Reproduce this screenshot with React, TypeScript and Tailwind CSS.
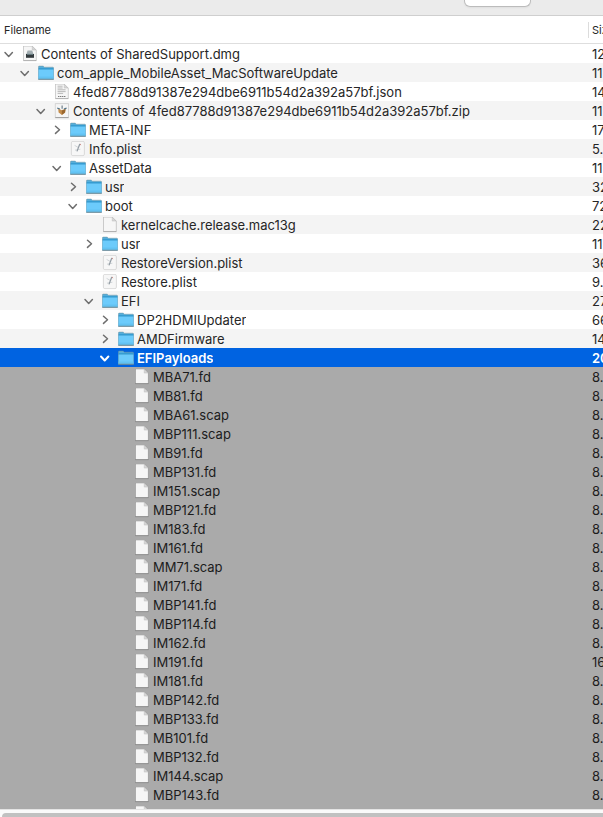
import React, { useState } from "react";

type Kind = "folder" | "dmg" | "json" | "zip" | "plist" | "blank";
type Toggle = "open" | "closed" | "none";
type Entry = { depth: number; kind: Kind; toggle: Toggle; name: string; size: string };

const e = (depth: number, kind: Kind, toggle: Toggle, name: string, size: string): Entry => ({
  depth, kind, toggle, name, size,
});

const tree: Entry[] = [
  e(0, "dmg", "open", "Contents of SharedSupport.dmg", "12"),
  e(1, "folder", "open", "com_apple_MobileAsset_MacSoftwareUpdate", "11"),
  e(2, "json", "none", "4fed87788d91387e294dbe6911b54d2a392a57bf.json", "14"),
  e(2, "zip", "open", "Contents of 4fed87788d91387e294dbe6911b54d2a392a57bf.zip", "11"),
  e(3, "folder", "closed", "META-INF", "17"),
  e(3, "plist", "none", "Info.plist", "5."),
  e(3, "folder", "open", "AssetData", "11"),
  e(4, "folder", "closed", "usr", "32"),
  e(4, "folder", "open", "boot", "72"),
  e(5, "blank", "none", "kernelcache.release.mac13g", "22"),
  e(5, "folder", "closed", "usr", "11"),
  e(5, "plist", "none", "RestoreVersion.plist", "36"),
  e(5, "plist", "none", "Restore.plist", "9."),
  e(5, "folder", "open", "EFI", "27"),
  e(6, "folder", "closed", "DP2HDMIUpdater", "66"),
  e(6, "folder", "closed", "AMDFirmware", "14"),
];

const payloads = [
  "MBA71.fd", "MB81.fd", "MBA61.scap", "MBP111.scap", "MB91.fd", "MBP131.fd", "IM151.scap",
  "MBP121.fd", "IM183.fd", "IM161.fd", "MM71.scap", "IM171.fd", "MBP141.fd", "MBP114.fd",
  "IM162.fd", "IM191.fd", "IM181.fd", "MBP142.fd", "MBP133.fd", "MB101.fd", "MBP132.fd",
  "IM144.scap", "MBP143.fd", "",
];

const indents = ["pl-0", "pl-4", "pl-8", "pl-12", "pl-16", "pl-20", "pl-24", "pl-28"];

function Chevron({ open, selected }: { open: boolean; selected: boolean }) {
  return (
    <svg
      viewBox="0 0 16 16"
      className={`size-4 fill-none ${selected ? "stroke-white" : "stroke-[#6e6e6e]"}`}
      strokeWidth={selected ? 2 : 1.5}
      strokeLinecap="round"
      strokeLinejoin="round"
    >
      <path d={open ? "M5 6.5l3.7 4 3.7-4" : "M7.5 4.2l4 3.6-4 3.6"} />
    </svg>
  );
}

function Page({ children }: { children?: React.ReactNode }) {
  return (
    <svg viewBox="0 1 16 16" className="size-4 shrink-0" aria-hidden="true">
      <path d="M1.5 1.1h8.8l4 4v10.5H1.5z" fill="#f6f6f6" stroke="#000" strokeOpacity=".22" strokeWidth=".8" />
      <path d="M1.5 15.6h12.8" stroke="#000" strokeOpacity=".2" strokeWidth=".8" />
      <path d="M10.2 1.2v3.9h3.9z" fill="#d6d6d6" stroke="#b4b4b4" strokeWidth=".4" />
      {children}
    </svg>
  );
}

function Icon({ kind }: { kind: Kind }) {
  if (kind === "folder") {
    return (
      <svg viewBox="0 0 16 16" className="size-4 shrink-0" aria-hidden="true">
        <path d="M.4 14.4V1.9q0-.8.8-.8h3.6q.6 0 1 .5l.6.6h8.4q.8 0 .8.8v11.4z" fill="#55aedb" stroke="#71909c" strokeWidth=".5" />
        <path d="M.6 3.2h14.8v1.4H.6z" fill="#2f98cf" />
        <path d="M.6 4.6h14.8v9.4H.6z" fill="#6ccbfb" />
        <path d="M.6 11.5h14.8v2.4H.6z" fill="#62c2f2" />
        <path d="M.4 14.2h15.2" stroke="#6f878f" strokeWidth=".8" />
      </svg>
    );
  }
  if (kind === "dmg") {
    return (
      <Page>
        <path d="M5.6 5.4h4.6l1.5 4H4.2z" fill="#a3aeb2" />
        <path d="M4 9h8v3.8H4z" fill="#333a3d" />
        <path d="M5 9.4h6" stroke="#6d8187" />
      </Page>
    );
  }
  if (kind === "json") {
    return (
      <Page>
        <path d="M3.6 3.2h5M3.6 5h5M3.6 6.8h8M3.6 8.6h8M3.6 10.4h5.5" stroke="#a9a9a9" strokeWidth=".8" />
        <path d="M4 13.5h7.5" stroke="#7d7d7d" strokeWidth="1.2" strokeDasharray="1.4 .6" />
      </Page>
    );
  }
  if (kind === "zip") {
    return (
      <svg viewBox="0 0 16 16" className="size-4 shrink-0" aria-hidden="true">
        <path d="M1.3.6h13.2v14H1.3z" fill="#f5f5f5" stroke="#b5b5b5" strokeWidth=".5" />
        <path d="M1.3 14.6h13.2" stroke="#8d8d8d" strokeWidth=".8" />
        <path d="M4.2 5.6l3.6 1.6 4-1.6-.6 4-3.2 2.4-3.4-2.4z" fill="#c48d4c" />
        <path d="M7.8 7.6v4.2l3-2 .6-3.4z" fill="#9a672f" />
        <path d="M7.4 2.4h1.5v3.4H7.4z" fill="#8a979f" />
        <path d="M3.2 5l2.6 1M12.6 5L10 6.2" stroke="#4f7186" strokeWidth="1.3" />
      </svg>
    );
  }
  if (kind === "plist") {
    return (
      <svg viewBox="0 0 16 16" className="size-4 shrink-0" aria-hidden="true">
        <rect x="1.4" y=".4" width="13" height="14.2" rx="1.4" fill="#f7f7f7" stroke="#cecece" strokeWidth=".7" />
        <path d="M4.6 4.4l3.6 2M5 9.2l5.4-1" stroke="#ccd1d5" strokeWidth=".9" />
        <path d="M9.8 3L7 10.4" stroke="#929ba3" strokeWidth="1.2" />
        <path d="M10.2 2.8l.6 1.4" stroke="#c98b86" strokeWidth=".9" />
      </svg>
    );
  }
  return <Page />;
}

function Row({ item, tone, onToggle }: { item: Entry; tone: string; onToggle?: () => void }) {
  const selected = item.name === "EFIPayloads";
  return (
    <tr className={`h-[19px] ${tone}`}>
      <td className="p-0">
        <div className={`flex h-[19px] items-center ${indents[item.depth]}`}>
          {item.toggle === "none" ? (
            <span className="w-[22px] shrink-0" />
          ) : (
            <button type="button" aria-label={`Toggle ${item.name}`} onClick={onToggle} className="w-[22px] shrink-0">
              <Chevron open={item.toggle === "open"} selected={selected} />
            </button>
          )}
          <Icon kind={item.kind} />
          <span className="truncate pl-[3px]">{item.name}</span>
        </div>
      </td>
      <td className="overflow-hidden p-0 pl-1 whitespace-nowrap">{item.size}</td>
    </tr>
  );
}

export default function App() {
  const [open, setOpen] = useState(true);
  return (
    <div className="flex h-screen flex-col overflow-hidden bg-white font-['Inter','Liberation_Sans',sans-serif] text-[13px] leading-4 text-[#262626]">
      <header className="flex h-4 shrink-0 justify-end border-b border-[#cfcfcf] bg-[#ebebeb] pr-[72px]">
        <button
          type="button"
          aria-label="Toolbar action"
          className="h-[7px] w-[67px] rounded-b-md border border-t-0 border-[#bcbcbc] bg-white shadow-xs"
        />
      </header>
      <main className="min-h-0 flex-1 overflow-hidden">
        <table className="w-full table-fixed border-separate border-spacing-0">
          <colgroup>
            <col />
            <col className="w-[15px]" />
          </colgroup>
          <thead>
            <tr className="h-7 text-left text-[11px]">
              <th className="border-b border-[#dedede] p-0 pl-1 font-normal">Filename</th>
              <th className="overflow-hidden border-b border-[#dedede] p-0 font-normal">
                <div className="border-l border-[#dcdcdc] pl-[3px]">Size</div>
              </th>
            </tr>
          </thead>
          <tbody>
            {tree.map((item, i) => (
              <Row key={i} item={item} tone={i % 2 ? "bg-[#f4f4f4]" : "bg-white"} />
            ))}
            <Row
              item={e(6, "folder", open ? "open" : "closed", "EFIPayloads", "20")}
              tone="bg-[#0063e1] font-semibold text-white"
              onToggle={() => setOpen(!open)}
            />
            {open &&
              payloads.map((name, i) => (
                <Row
                  key={i}
                  item={e(7, "blank", "none", name, name === "IM191.fd" ? "16" : name ? "8." : "")}
                  tone="bg-[#aaaaaa] text-[#1c1c1c]"
                />
              ))}
          </tbody>
        </table>
      </main>
      <footer className="h-2 shrink-0 border-t border-[#e4e4e4] bg-[#fafafa] pt-[3px]">
        <div className="ml-0.5 h-2 rounded-l-full bg-[#c1c1c1]" />
      </footer>
    </div>
  );
}
